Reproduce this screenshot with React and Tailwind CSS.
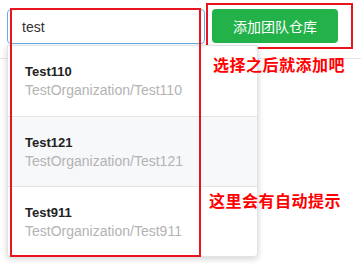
import { useState } from 'react';

const repos = [
  { name: 'Test110', path: 'TestOrganization/Test110' },
  { name: 'Test121', path: 'TestOrganization/Test121' },
  { name: 'Test911', path: 'TestOrganization/Test911' },
];

export default function App() {
  const [query, setQuery] = useState('test');
  const [active] = useState(1);

  return (
    <div className="relative w-[361px] h-[275px] overflow-hidden bg-white font-['Liberation_Sans','Noto_Sans_CJK_SC',sans-serif]">
      <div className="flex items-start h-[59px] border-b border-[#e5e5e5] pt-[3px] pl-[7px]">
        <input
          value={query}
          onChange={(e) => setQuery(e.target.value)}
          className="mt-[6px] w-[198px] h-[35px] rounded-[4px] border border-[#66afe9] px-[14px] text-[14px] text-[#333] outline-none"
        />
        {/* red note box around the button */}
        <div className="ml-[1px] w-[147px] h-[46px] border-2 border-[#e8141e] pt-[4px] pl-[4px]">
          <button className="w-[126px] h-[34px] rounded-[4px] bg-[#23b24a] text-[14px] text-white font-['Noto_Sans_CJK_SC',sans-serif]">
            添加团队仓库
          </button>
        </div>
      </div>

      {/* suggestion dropdown */}
      <div className="absolute left-[7px] top-[45px] w-[251px] rounded-b-[4px] bg-white shadow-[0_2px_6px_rgba(0,0,0,0.18)] border border-[#e3e3e3]">
        {repos.map((r, i) => (
          <div
            key={r.name}
            className={`h-[70px] flex flex-col justify-center pl-[17px] ${i > 0 ? 'border-t border-[#e4e4e4]' : ''} ${i === active ? 'bg-[#f7f8fa]' : ''}`}
          >
            <div className="text-[13px] font-bold leading-[18px] text-[#222]">{r.name}</div>
            <div className="text-[14px] leading-[18px] text-[#b3b3b3]">{r.path}</div>
          </div>
        ))}
      </div>

      {/* annotations */}
      <div className="absolute left-[10px] top-[8px] w-[191px] h-[249px] border-2 border-[#e8141e]" />
      <div className="absolute left-[213px] top-[53px] text-[16px] font-bold leading-[22px] tracking-[0.5px] text-[#ff0000] font-['Noto_Sans_CJK_SC',sans-serif]">
        选择之后就添加吧
      </div>
      <div className="absolute left-[209px] top-[189px] text-[16px] font-bold leading-[22px] tracking-[0.5px] text-[#ff0000] font-['Noto_Sans_CJK_SC',sans-serif]">
        这里会有自动提示
      </div>
    </div>
  );
}
